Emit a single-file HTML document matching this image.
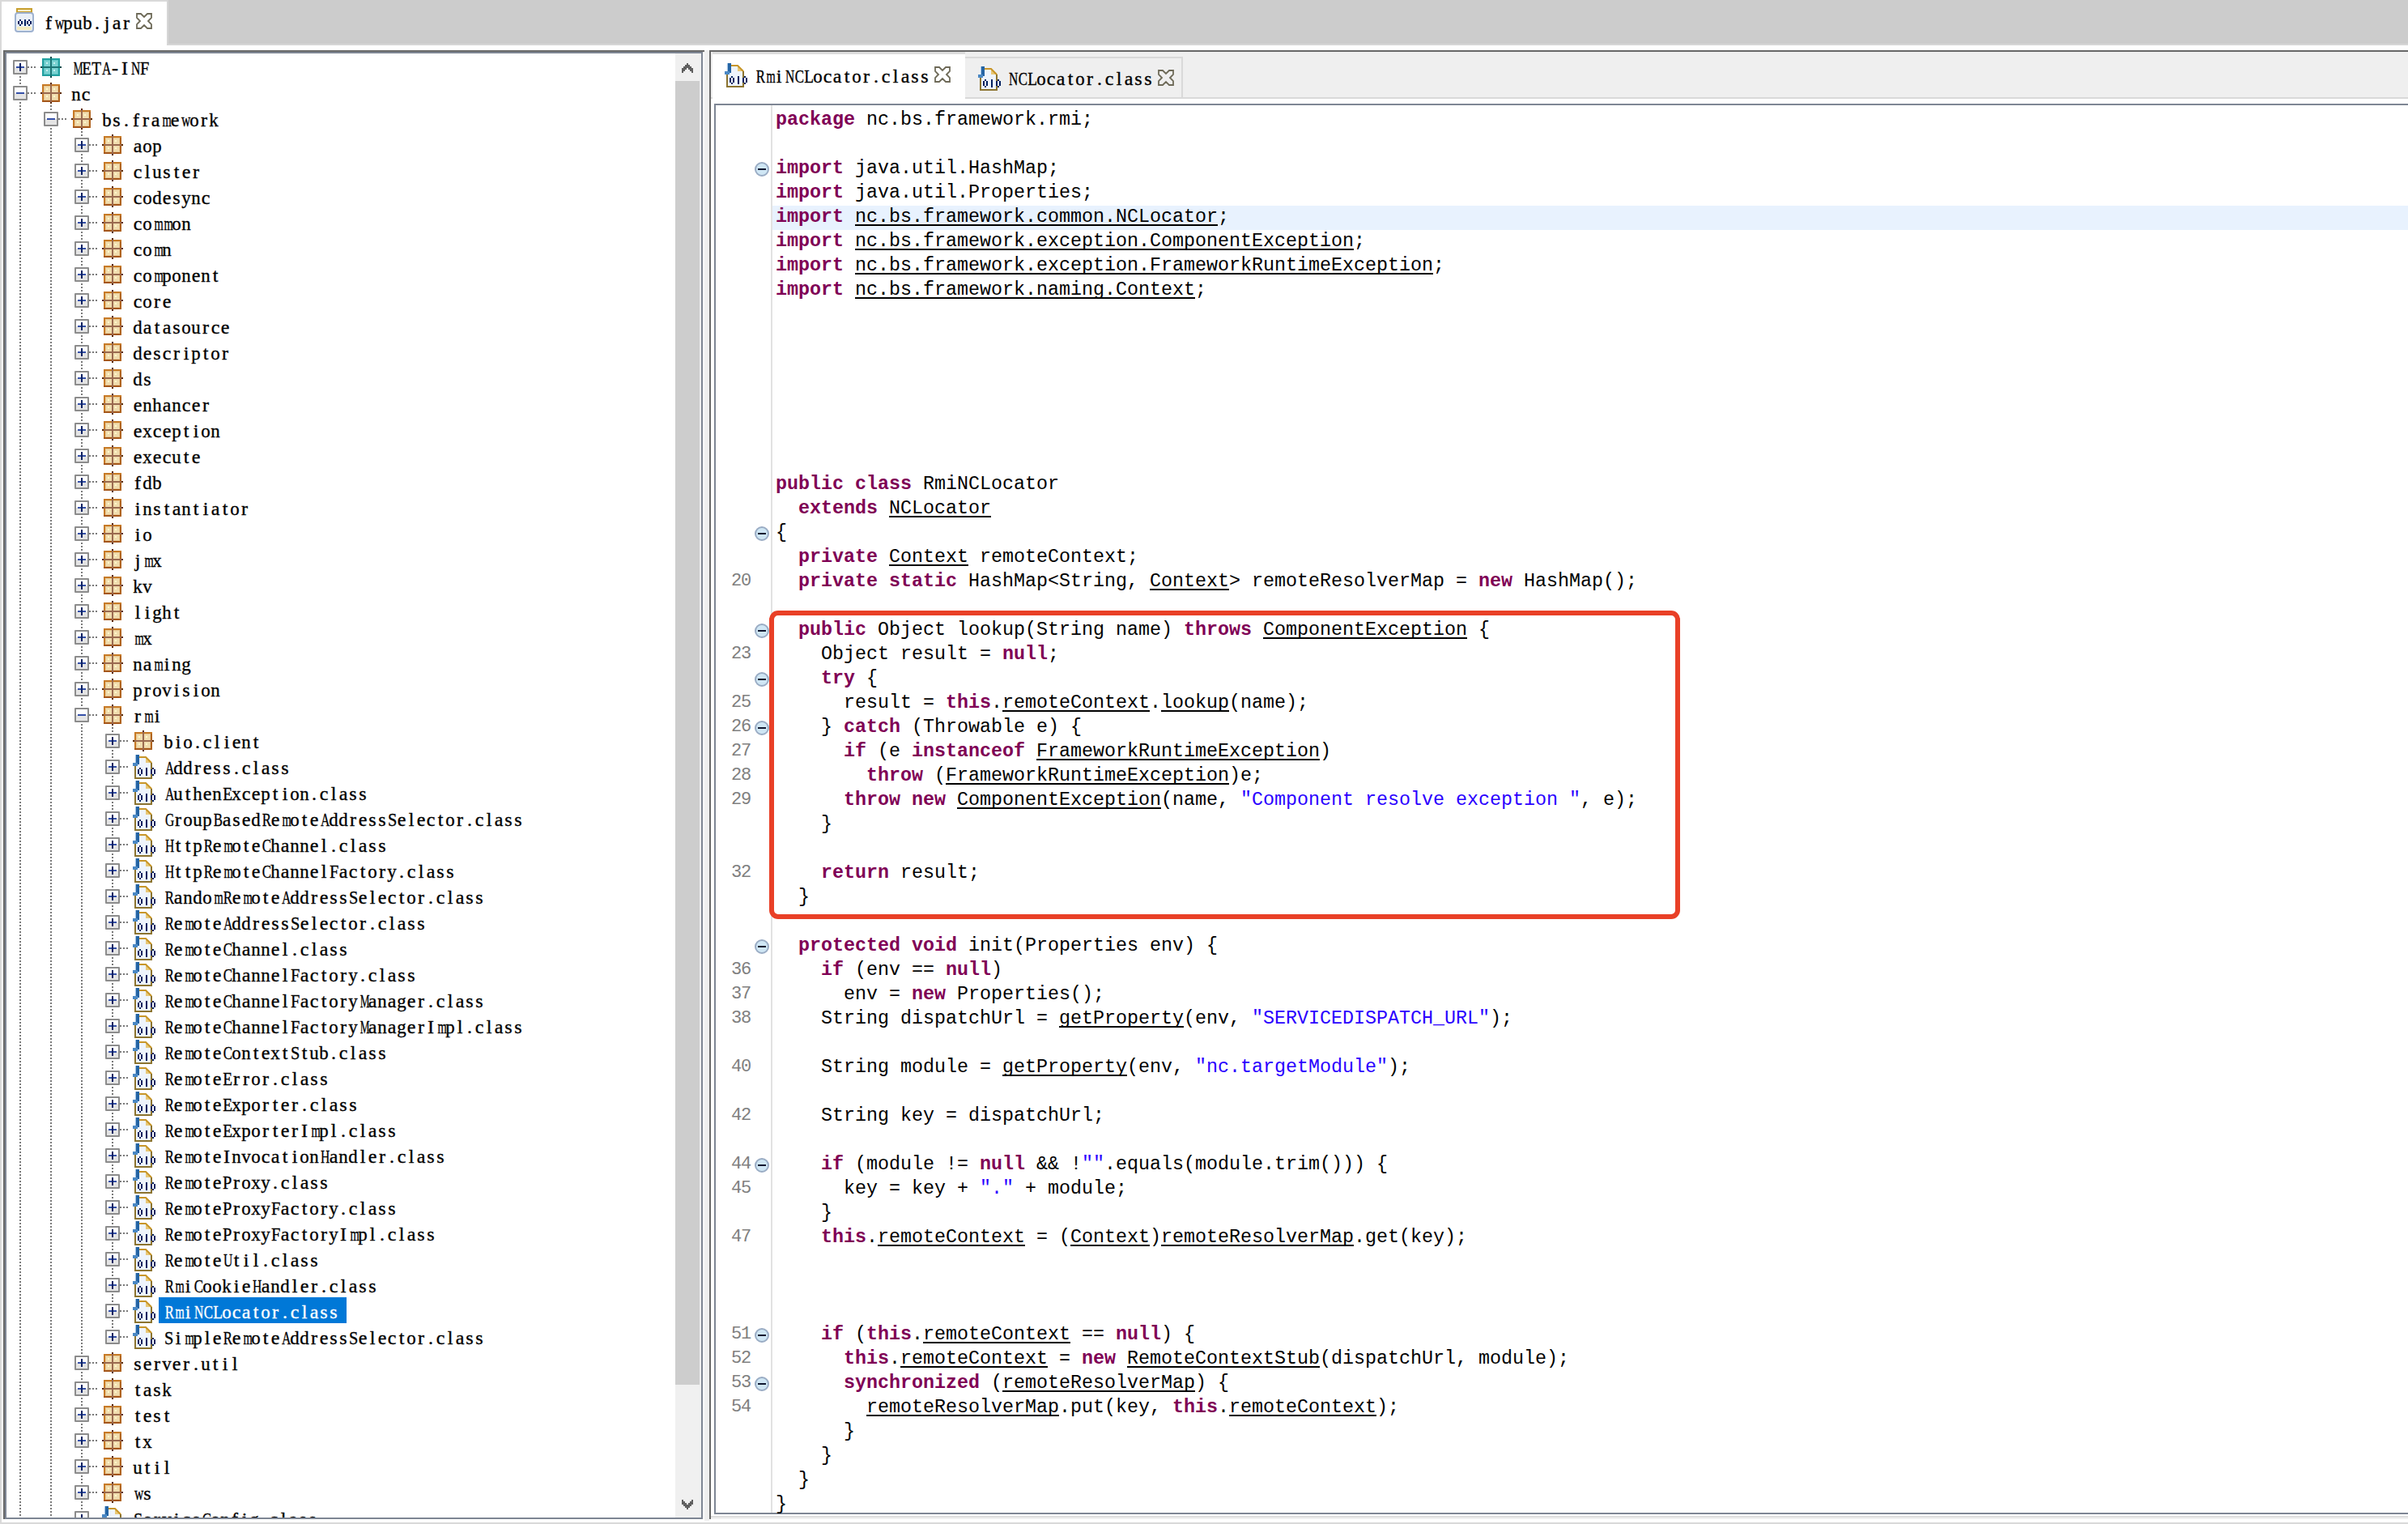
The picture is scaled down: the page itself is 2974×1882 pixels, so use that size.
<!DOCTYPE html>
<html><head><meta charset="utf-8">
<style>
html,body{margin:0;padding:0;}
body{width:2974px;height:1882px;position:relative;overflow:hidden;background:#fff;font-family:"Liberation Mono",monospace;}
.a{position:absolute;box-sizing:border-box;}
/* top bar */
#frameL{position:absolute;left:0;top:0;width:2px;height:1882px;background:#d9d9d9;}
#frameB{position:absolute;left:0;top:1880px;width:2974px;height:2px;background:#d9d9d9;}
#topbar{position:absolute;left:206px;top:0;width:2768px;height:56px;background:#cccccc;border-left:2px solid #d6d6d6;border-bottom:2px solid #d6d6d6;box-sizing:border-box;}
#toptop{position:absolute;left:0;top:0;width:206px;height:2px;background:#d9d9d9;}
.ttab{position:absolute;font-family:"Liberation Serif",serif;font-size:24px;-webkit-text-stroke:0.35px #000;line-height:32px;color:#000;white-space:pre;}
.tt b,.ttab b{display:inline-block;width:12px;text-align:center;font-weight:normal;}
.q8{transform:scaleX(0.40)}.q9{transform:scaleX(0.45)}.q10{transform:scaleX(0.50)}.q11{transform:scaleX(0.55)}.q12{transform:scaleX(0.60)}.q13{transform:scaleX(0.65)}.q14{transform:scaleX(0.70)}.q15{transform:scaleX(0.75)}.q16{transform:scaleX(0.80)}.q17{transform:scaleX(0.85)}.q18{transform:scaleX(0.90)}.q19{transform:scaleX(0.95)}
/* left panel */
#lp{position:absolute;left:4px;top:62px;width:866px;height:1814px;border-top:2px solid #686868;border-left:2px solid #686868;box-sizing:border-box;}
#lpi{position:absolute;left:6px;top:64px;width:862px;height:1812px;border:2px solid #7e8694;box-sizing:border-box;overflow:hidden;}
#tree{position:absolute;left:0;top:0;width:870px;height:1874px;overflow:hidden;}
#gap{position:absolute;left:870px;top:62px;width:6px;height:1816px;background:#efefef;}
#sb{position:absolute;left:834px;top:66px;width:32px;height:1808px;background:#f0f0f0;}
#thumb{position:absolute;left:834px;top:100px;width:30px;height:1610px;background:#cdcdcd;}
.vd{position:absolute;width:2px;background:repeating-linear-gradient(to bottom,transparent 0,transparent 2px,#7a7a7a 2px,#7a7a7a 4px);}
.hd{position:absolute;width:10px;height:2px;background:repeating-linear-gradient(to right,#7a7a7a 0,#7a7a7a 2px,transparent 2px,transparent 4px);}
.bx{position:absolute;width:18px;height:18px;box-sizing:border-box;border:2px solid #8c8c8c;background:linear-gradient(#ffffff 0,#ffffff 50%,#e4e4e4 50%,#e4e4e4 100%);border-radius:1px;}
.bx .h{position:absolute;left:2px;top:6px;width:10px;height:2px;background:#3550a8;}
.bx .v{position:absolute;left:6px;top:2px;width:2px;height:10px;background:#0c2262;}
.ic{position:absolute;overflow:visible;}
.tt{position:absolute;font-family:"Liberation Serif",serif;font-size:24px;line-height:32px;height:32px;color:#000;white-space:pre;padding-top:2px;-webkit-text-stroke:0.35px #000;box-sizing:border-box;}
.ts{color:#fff;-webkit-text-stroke:0.35px #fff;}
.sel{position:absolute;height:32px;background:#0078d7;}
/* right panel */
#rp{position:absolute;left:876px;top:62px;width:2098px;height:1814px;border-top:2px solid #686868;border-left:2px solid #686868;box-sizing:border-box;background:#ffffff;}
#tabstrip{position:absolute;left:878px;top:64px;width:2096px;height:58px;background:#efefef;border-bottom:2px solid #d9d9d9;box-sizing:border-box;}
#tab1{position:absolute;left:880px;top:64px;width:312px;height:58px;background:#fff;border-top:3px solid #dcdcdc;box-sizing:border-box;}
#tab2{position:absolute;left:1192px;top:70px;width:269px;height:52px;background:#efefef;border:2px solid #d9d9d9;border-left:none;box-sizing:border-box;}
#ed{position:absolute;left:882px;top:128px;width:2092px;height:1742px;border:2px solid #7e8694;border-right:none;box-sizing:border-box;background:#fff;}
#gut{position:absolute;left:952px;top:130px;width:2px;height:1738px;background:#e2e2e2;}
#hl{position:absolute;left:954px;top:254px;width:2020px;height:30px;background:#e8f2fe;}
#edb1{position:absolute;left:878px;top:1872px;width:2096px;height:2px;background:#dedede;}
#edb2{position:absolute;left:878px;top:1874px;width:2096px;height:2px;background:#f0f0f0;}
.cl{position:absolute;left:958px;height:30px;line-height:30px;font-size:23.333px;color:#000;white-space:pre;}
.k{font-weight:bold;color:#7f0055;}
.s{color:#2a00ff;}
.u{text-decoration:underline;text-decoration-thickness:2px;text-underline-offset:3px;text-decoration-skip-ink:none;}
.ln{position:absolute;left:881px;width:46px;text-align:right;height:30px;line-height:30px;font-size:22px;letter-spacing:-1.2px;color:#808080;white-space:pre;}
.fd{position:absolute;left:931px;}
#redbox{position:absolute;left:950px;top:754px;width:1125px;height:381px;border:6px solid #e94027;border-radius:11px;box-sizing:border-box;}
</style></head><body>
<svg width="0" height="0" style="position:absolute">
<defs>
<symbol id="pkg" viewBox="0 0 26 26">
<rect x="2" y="2" width="22" height="22" fill="#c77a26"/>
<rect x="2" y="22" width="22" height="2" fill="#a4561a"/><rect x="22" y="4" width="2" height="20" fill="#b06420"/>
<rect x="4" y="4" width="18" height="18" fill="#e6c692"/>
<rect x="5" y="5" width="7" height="7" fill="#f0dcae"/><rect x="14" y="5" width="7" height="7" fill="#f0dcae"/>
<rect x="5" y="14" width="7" height="7" fill="#f0dcae"/><rect x="14" y="14" width="7" height="7" fill="#f0dcae"/>
<rect x="7" y="7" width="2" height="2" fill="#fffacc"/><rect x="16" y="7" width="2" height="2" fill="#fffacc"/>
<rect x="7" y="16" width="2" height="2" fill="#fffacc"/><rect x="16" y="16" width="2" height="2" fill="#fffacc"/>
<rect x="12" y="2" width="2" height="22" fill="#9a6a50"/><rect x="2" y="12" width="22" height="2" fill="#9a6a50"/>
<rect x="12" y="0" width="2" height="2" fill="#5a2800"/><rect x="12" y="24" width="2" height="2" fill="#5a2800"/>
<rect x="0" y="12" width="2" height="2" fill="#5a2800"/><rect x="24" y="12" width="2" height="2" fill="#5a2800"/>
</symbol>
<symbol id="pkgm" viewBox="0 0 26 26">
<rect x="2" y="2" width="22" height="22" fill="#22a0a0"/>
<rect x="4" y="4" width="18" height="18" fill="#5cc4c4"/>
<rect x="5" y="5" width="7" height="7" fill="#7ad2d2"/><rect x="14" y="5" width="7" height="7" fill="#7ad2d2"/>
<rect x="5" y="14" width="7" height="7" fill="#7ad2d2"/><rect x="14" y="14" width="7" height="7" fill="#7ad2d2"/>
<rect x="7" y="7" width="2" height="2" fill="#c8f0f0"/><rect x="16" y="7" width="2" height="2" fill="#c8f0f0"/>
<rect x="7" y="16" width="2" height="2" fill="#c8f0f0"/><rect x="16" y="16" width="2" height="2" fill="#c8f0f0"/>
<rect x="12" y="2" width="2" height="22" fill="#1d7676"/><rect x="2" y="12" width="22" height="2" fill="#1d7676"/>
<rect x="12" y="0" width="2" height="2" fill="#0f4a4a"/><rect x="12" y="24" width="2" height="2" fill="#0f4a4a"/>
<rect x="0" y="12" width="2" height="2" fill="#0f4a4a"/><rect x="24" y="12" width="2" height="2" fill="#0f4a4a"/>
</symbol>
<symbol id="cls" viewBox="0 0 34 34">
<path d="M6 4 H20 L28 12 V32 H6 Z" fill="#eef4fc"/>
<path d="M20 4 V12 H28 Z" fill="#e8c878"/>
<path d="M12 5 H20 L27 12" fill="none" stroke="#c8962a" stroke-width="2"/>
<path d="M27 12 V31 H7 V16" fill="none" stroke="#8c7430" stroke-width="2"/>
<rect x="8" y="2" width="4" height="12" fill="#2464a4"/><rect x="7" y="2" width="1" height="12" fill="#a8c8e8"/>
<rect x="4" y="12" width="6" height="4" fill="#4a88c4"/>
<path d="M12 18H14V20H12ZM10 20H12V26H10ZM14 20H16V26H14ZM12 26H14V28H12Z" fill="#002060"/>
<rect x="20" y="18" width="2" height="10" fill="#002060"/>
<path d="M28 18H30V20H28ZM26 20H28V26H26ZM30 20H32V26H30ZM28 26H30V28H28Z" fill="#002060"/>
</symbol>
<symbol id="jar" viewBox="0 0 24 30">
<rect x="2" y="0" width="20" height="6" fill="#c8a030"/><rect x="4" y="2" width="16" height="2" fill="#f6eec8"/>
<rect x="1" y="6" width="22" height="23" rx="3" fill="#eaf0f8" stroke="#9eb2d0" stroke-width="2"/>
<rect x="3" y="23" width="18" height="4" fill="#f4ecc0"/>
<path d="M6 14H8V16H6ZM4 16H6V20H4ZM8 16H10V20H8ZM6 20H8V22H6Z" fill="#002060"/>
<rect x="12" y="14" width="2" height="8" fill="#002060"/>
<path d="M17 14H19V16H17ZM15 16H17V20H15ZM19 16H21V20H19ZM17 20H19V22H17Z" fill="#002060"/>
</symbol>
<symbol id="xx" viewBox="0 0 20 20">
<path d="M1 1 H6 L10 5 L14 1 H19 V6 L15 10 L19 14 V19 H14 L10 15 L6 19 H1 V14 L5 10 L1 6 Z" fill="none" stroke="#6e6a58" stroke-width="1.8"/>
</symbol>
<symbol id="fold" viewBox="0 0 20 20">
<circle cx="10" cy="10" r="8" fill="#cfe6f4" stroke="#9aacc4" stroke-width="2"/>
<rect x="5" y="9" width="10" height="2" fill="#101830"/>
</symbol>
<symbol id="chev" viewBox="0 0 14 12"><path d="M6 0H8V2H10V4H12V6H14V12H12V10H10V8H8V6H6V8H4V10H2V12H0V6H2V4H4V2H6Z" fill="#606060"/></symbol>
</defs></svg>

<div id="toptop"></div>
<div id="topbar"></div>
<div id="frameL"></div>
<svg class="ic" style="left:18px;top:10px" width="24" height="30"><use href="#jar"/></svg>
<div class="ttab" style="left:54px;top:12px"><b>f</b><b class="q13">w</b><b class="q19">p</b><b class="q19">u</b><b class="q19">b</b><b>.</b><b>j</b><b>a</b><b>r</b></div>
<svg class="ic" style="left:168px;top:16px" width="20" height="20"><use href="#xx"/></svg>

<div id="lp"></div>
<div id="lpi"></div>
<div id="tree">
<div class="vd" style="left:24px;top:92px;height:1782px"></div>
<div class="vd" style="left:62px;top:124px;height:1750px"></div>
<div class="vd" style="left:100px;top:156px;height:1718px"></div>
<div class="vd" style="left:138px;top:892px;height:754px"></div>
<div class="hd" style="left:34px;top:82px"></div>
<div class="bx" style="left:16px;top:74px"><i class="h"></i><i class="v"></i></div>
<svg class="ic" style="left:50px;top:70px" width="26" height="26"><use href="#pkgm"/></svg>
<div class="tt" style="left:88px;top:66px"><b class="q11">M</b><b class="q16">E</b><b class="q16">T</b><b class="q13">A</b><b>-</b><b>I</b><b class="q13">N</b><b class="q17">F</b></div>
<div class="hd" style="left:34px;top:114px"></div>
<div class="bx" style="left:16px;top:106px"><i class="h"></i></div>
<svg class="ic" style="left:50px;top:102px" width="26" height="26"><use href="#pkg"/></svg>
<div class="tt" style="left:88px;top:98px"><b class="q19">n</b><b>c</b></div>
<div class="hd" style="left:72px;top:146px"></div>
<div class="bx" style="left:54px;top:138px"><i class="h"></i></div>
<svg class="ic" style="left:88px;top:134px" width="26" height="26"><use href="#pkg"/></svg>
<div class="tt" style="left:126px;top:130px"><b class="q19">b</b><b>s</b><b>.</b><b>f</b><b>r</b><b>a</b><b class="q12">m</b><b>e</b><b class="q13">w</b><b class="q19">o</b><b>r</b><b class="q19">k</b></div>
<div class="hd" style="left:110px;top:178px"></div>
<div class="bx" style="left:92px;top:170px"><i class="h"></i><i class="v"></i></div>
<svg class="ic" style="left:126px;top:166px" width="26" height="26"><use href="#pkg"/></svg>
<div class="tt" style="left:164px;top:162px"><b>a</b><b class="q19">o</b><b class="q19">p</b></div>
<div class="hd" style="left:110px;top:210px"></div>
<div class="bx" style="left:92px;top:202px"><i class="h"></i><i class="v"></i></div>
<svg class="ic" style="left:126px;top:198px" width="26" height="26"><use href="#pkg"/></svg>
<div class="tt" style="left:164px;top:194px"><b>c</b><b>l</b><b class="q19">u</b><b>s</b><b>t</b><b>e</b><b>r</b></div>
<div class="hd" style="left:110px;top:242px"></div>
<div class="bx" style="left:92px;top:234px"><i class="h"></i><i class="v"></i></div>
<svg class="ic" style="left:126px;top:230px" width="26" height="26"><use href="#pkg"/></svg>
<div class="tt" style="left:164px;top:226px"><b>c</b><b class="q19">o</b><b class="q19">d</b><b>e</b><b>s</b><b class="q19">y</b><b class="q19">n</b><b>c</b></div>
<div class="hd" style="left:110px;top:274px"></div>
<div class="bx" style="left:92px;top:266px"><i class="h"></i><i class="v"></i></div>
<svg class="ic" style="left:126px;top:262px" width="26" height="26"><use href="#pkg"/></svg>
<div class="tt" style="left:164px;top:258px"><b>c</b><b class="q19">o</b><b class="q12">m</b><b class="q12">m</b><b class="q19">o</b><b class="q19">n</b></div>
<div class="hd" style="left:110px;top:306px"></div>
<div class="bx" style="left:92px;top:298px"><i class="h"></i><i class="v"></i></div>
<svg class="ic" style="left:126px;top:294px" width="26" height="26"><use href="#pkg"/></svg>
<div class="tt" style="left:164px;top:290px"><b>c</b><b class="q19">o</b><b class="q12">m</b><b class="q19">n</b></div>
<div class="hd" style="left:110px;top:338px"></div>
<div class="bx" style="left:92px;top:330px"><i class="h"></i><i class="v"></i></div>
<svg class="ic" style="left:126px;top:326px" width="26" height="26"><use href="#pkg"/></svg>
<div class="tt" style="left:164px;top:322px"><b>c</b><b class="q19">o</b><b class="q12">m</b><b class="q19">p</b><b class="q19">o</b><b class="q19">n</b><b>e</b><b class="q19">n</b><b>t</b></div>
<div class="hd" style="left:110px;top:370px"></div>
<div class="bx" style="left:92px;top:362px"><i class="h"></i><i class="v"></i></div>
<svg class="ic" style="left:126px;top:358px" width="26" height="26"><use href="#pkg"/></svg>
<div class="tt" style="left:164px;top:354px"><b>c</b><b class="q19">o</b><b>r</b><b>e</b></div>
<div class="hd" style="left:110px;top:402px"></div>
<div class="bx" style="left:92px;top:394px"><i class="h"></i><i class="v"></i></div>
<svg class="ic" style="left:126px;top:390px" width="26" height="26"><use href="#pkg"/></svg>
<div class="tt" style="left:164px;top:386px"><b class="q19">d</b><b>a</b><b>t</b><b>a</b><b>s</b><b class="q19">o</b><b class="q19">u</b><b>r</b><b>c</b><b>e</b></div>
<div class="hd" style="left:110px;top:434px"></div>
<div class="bx" style="left:92px;top:426px"><i class="h"></i><i class="v"></i></div>
<svg class="ic" style="left:126px;top:422px" width="26" height="26"><use href="#pkg"/></svg>
<div class="tt" style="left:164px;top:418px"><b class="q19">d</b><b>e</b><b>s</b><b>c</b><b>r</b><b>i</b><b class="q19">p</b><b>t</b><b class="q19">o</b><b>r</b></div>
<div class="hd" style="left:110px;top:466px"></div>
<div class="bx" style="left:92px;top:458px"><i class="h"></i><i class="v"></i></div>
<svg class="ic" style="left:126px;top:454px" width="26" height="26"><use href="#pkg"/></svg>
<div class="tt" style="left:164px;top:450px"><b class="q19">d</b><b>s</b></div>
<div class="hd" style="left:110px;top:498px"></div>
<div class="bx" style="left:92px;top:490px"><i class="h"></i><i class="v"></i></div>
<svg class="ic" style="left:126px;top:486px" width="26" height="26"><use href="#pkg"/></svg>
<div class="tt" style="left:164px;top:482px"><b>e</b><b class="q19">n</b><b class="q19">h</b><b>a</b><b class="q19">n</b><b>c</b><b>e</b><b>r</b></div>
<div class="hd" style="left:110px;top:530px"></div>
<div class="bx" style="left:92px;top:522px"><i class="h"></i><i class="v"></i></div>
<svg class="ic" style="left:126px;top:518px" width="26" height="26"><use href="#pkg"/></svg>
<div class="tt" style="left:164px;top:514px"><b>e</b><b class="q19">x</b><b>c</b><b>e</b><b class="q19">p</b><b>t</b><b>i</b><b class="q19">o</b><b class="q19">n</b></div>
<div class="hd" style="left:110px;top:562px"></div>
<div class="bx" style="left:92px;top:554px"><i class="h"></i><i class="v"></i></div>
<svg class="ic" style="left:126px;top:550px" width="26" height="26"><use href="#pkg"/></svg>
<div class="tt" style="left:164px;top:546px"><b>e</b><b class="q19">x</b><b>e</b><b>c</b><b class="q19">u</b><b>t</b><b>e</b></div>
<div class="hd" style="left:110px;top:594px"></div>
<div class="bx" style="left:92px;top:586px"><i class="h"></i><i class="v"></i></div>
<svg class="ic" style="left:126px;top:582px" width="26" height="26"><use href="#pkg"/></svg>
<div class="tt" style="left:164px;top:578px"><b>f</b><b class="q19">d</b><b class="q19">b</b></div>
<div class="hd" style="left:110px;top:626px"></div>
<div class="bx" style="left:92px;top:618px"><i class="h"></i><i class="v"></i></div>
<svg class="ic" style="left:126px;top:614px" width="26" height="26"><use href="#pkg"/></svg>
<div class="tt" style="left:164px;top:610px"><b>i</b><b class="q19">n</b><b>s</b><b>t</b><b>a</b><b class="q19">n</b><b>t</b><b>i</b><b>a</b><b>t</b><b class="q19">o</b><b>r</b></div>
<div class="hd" style="left:110px;top:658px"></div>
<div class="bx" style="left:92px;top:650px"><i class="h"></i><i class="v"></i></div>
<svg class="ic" style="left:126px;top:646px" width="26" height="26"><use href="#pkg"/></svg>
<div class="tt" style="left:164px;top:642px"><b>i</b><b class="q19">o</b></div>
<div class="hd" style="left:110px;top:690px"></div>
<div class="bx" style="left:92px;top:682px"><i class="h"></i><i class="v"></i></div>
<svg class="ic" style="left:126px;top:678px" width="26" height="26"><use href="#pkg"/></svg>
<div class="tt" style="left:164px;top:674px"><b>j</b><b class="q12">m</b><b class="q19">x</b></div>
<div class="hd" style="left:110px;top:722px"></div>
<div class="bx" style="left:92px;top:714px"><i class="h"></i><i class="v"></i></div>
<svg class="ic" style="left:126px;top:710px" width="26" height="26"><use href="#pkg"/></svg>
<div class="tt" style="left:164px;top:706px"><b class="q19">k</b><b class="q19">v</b></div>
<div class="hd" style="left:110px;top:754px"></div>
<div class="bx" style="left:92px;top:746px"><i class="h"></i><i class="v"></i></div>
<svg class="ic" style="left:126px;top:742px" width="26" height="26"><use href="#pkg"/></svg>
<div class="tt" style="left:164px;top:738px"><b>l</b><b>i</b><b class="q19">g</b><b class="q19">h</b><b>t</b></div>
<div class="hd" style="left:110px;top:786px"></div>
<div class="bx" style="left:92px;top:778px"><i class="h"></i><i class="v"></i></div>
<svg class="ic" style="left:126px;top:774px" width="26" height="26"><use href="#pkg"/></svg>
<div class="tt" style="left:164px;top:770px"><b class="q12">m</b><b class="q19">x</b></div>
<div class="hd" style="left:110px;top:818px"></div>
<div class="bx" style="left:92px;top:810px"><i class="h"></i><i class="v"></i></div>
<svg class="ic" style="left:126px;top:806px" width="26" height="26"><use href="#pkg"/></svg>
<div class="tt" style="left:164px;top:802px"><b class="q19">n</b><b>a</b><b class="q12">m</b><b>i</b><b class="q19">n</b><b class="q19">g</b></div>
<div class="hd" style="left:110px;top:850px"></div>
<div class="bx" style="left:92px;top:842px"><i class="h"></i><i class="v"></i></div>
<svg class="ic" style="left:126px;top:838px" width="26" height="26"><use href="#pkg"/></svg>
<div class="tt" style="left:164px;top:834px"><b class="q19">p</b><b>r</b><b class="q19">o</b><b class="q19">v</b><b>i</b><b>s</b><b>i</b><b class="q19">o</b><b class="q19">n</b></div>
<div class="hd" style="left:110px;top:882px"></div>
<div class="bx" style="left:92px;top:874px"><i class="h"></i></div>
<svg class="ic" style="left:126px;top:870px" width="26" height="26"><use href="#pkg"/></svg>
<div class="tt" style="left:164px;top:866px"><b>r</b><b class="q12">m</b><b>i</b></div>
<div class="hd" style="left:148px;top:914px"></div>
<div class="bx" style="left:130px;top:906px"><i class="h"></i><i class="v"></i></div>
<svg class="ic" style="left:164px;top:902px" width="26" height="26"><use href="#pkg"/></svg>
<div class="tt" style="left:202px;top:898px"><b class="q19">b</b><b>i</b><b class="q19">o</b><b>.</b><b>c</b><b>l</b><b>i</b><b>e</b><b class="q19">n</b><b>t</b></div>
<div class="hd" style="left:148px;top:946px"></div>
<div class="bx" style="left:130px;top:938px"><i class="h"></i><i class="v"></i></div>
<svg class="ic" style="left:160px;top:930px" width="34" height="34"><use href="#cls"/></svg>
<div class="tt" style="left:202px;top:930px"><b class="q13">A</b><b class="q19">d</b><b class="q19">d</b><b>r</b><b>e</b><b>s</b><b>s</b><b>.</b><b>c</b><b>l</b><b>a</b><b>s</b><b>s</b></div>
<div class="hd" style="left:148px;top:978px"></div>
<div class="bx" style="left:130px;top:970px"><i class="h"></i><i class="v"></i></div>
<svg class="ic" style="left:160px;top:962px" width="34" height="34"><use href="#cls"/></svg>
<div class="tt" style="left:202px;top:962px"><b class="q13">A</b><b class="q19">u</b><b>t</b><b class="q19">h</b><b>e</b><b class="q19">n</b><b class="q16">E</b><b class="q19">x</b><b>c</b><b>e</b><b class="q19">p</b><b>t</b><b>i</b><b class="q19">o</b><b class="q19">n</b><b>.</b><b>c</b><b>l</b><b>a</b><b>s</b><b>s</b></div>
<div class="hd" style="left:148px;top:1010px"></div>
<div class="bx" style="left:130px;top:1002px"><i class="h"></i><i class="v"></i></div>
<svg class="ic" style="left:160px;top:994px" width="34" height="34"><use href="#cls"/></svg>
<div class="tt" style="left:202px;top:994px"><b class="q13">G</b><b>r</b><b class="q19">o</b><b class="q19">u</b><b class="q19">p</b><b class="q14">B</b><b>a</b><b>s</b><b>e</b><b class="q19">d</b><b class="q14">R</b><b>e</b><b class="q12">m</b><b class="q19">o</b><b>t</b><b>e</b><b class="q13">A</b><b class="q19">d</b><b class="q19">d</b><b>r</b><b>e</b><b>s</b><b>s</b><b class="q17">S</b><b>e</b><b>l</b><b>e</b><b>c</b><b>t</b><b class="q19">o</b><b>r</b><b>.</b><b>c</b><b>l</b><b>a</b><b>s</b><b>s</b></div>
<div class="hd" style="left:148px;top:1042px"></div>
<div class="bx" style="left:130px;top:1034px"><i class="h"></i><i class="v"></i></div>
<svg class="ic" style="left:160px;top:1026px" width="34" height="34"><use href="#cls"/></svg>
<div class="tt" style="left:202px;top:1026px"><b class="q13">H</b><b>t</b><b>t</b><b class="q19">p</b><b class="q14">R</b><b>e</b><b class="q12">m</b><b class="q19">o</b><b>t</b><b>e</b><b class="q14">C</b><b class="q19">h</b><b>a</b><b class="q19">n</b><b class="q19">n</b><b>e</b><b>l</b><b>.</b><b>c</b><b>l</b><b>a</b><b>s</b><b>s</b></div>
<div class="hd" style="left:148px;top:1074px"></div>
<div class="bx" style="left:130px;top:1066px"><i class="h"></i><i class="v"></i></div>
<svg class="ic" style="left:160px;top:1058px" width="34" height="34"><use href="#cls"/></svg>
<div class="tt" style="left:202px;top:1058px"><b class="q13">H</b><b>t</b><b>t</b><b class="q19">p</b><b class="q14">R</b><b>e</b><b class="q12">m</b><b class="q19">o</b><b>t</b><b>e</b><b class="q14">C</b><b class="q19">h</b><b>a</b><b class="q19">n</b><b class="q19">n</b><b>e</b><b>l</b><b class="q17">F</b><b>a</b><b>c</b><b>t</b><b class="q19">o</b><b>r</b><b class="q19">y</b><b>.</b><b>c</b><b>l</b><b>a</b><b>s</b><b>s</b></div>
<div class="hd" style="left:148px;top:1106px"></div>
<div class="bx" style="left:130px;top:1098px"><i class="h"></i><i class="v"></i></div>
<svg class="ic" style="left:160px;top:1090px" width="34" height="34"><use href="#cls"/></svg>
<div class="tt" style="left:202px;top:1090px"><b class="q14">R</b><b>a</b><b class="q19">n</b><b class="q19">d</b><b class="q19">o</b><b class="q12">m</b><b class="q14">R</b><b>e</b><b class="q12">m</b><b class="q19">o</b><b>t</b><b>e</b><b class="q13">A</b><b class="q19">d</b><b class="q19">d</b><b>r</b><b>e</b><b>s</b><b>s</b><b class="q17">S</b><b>e</b><b>l</b><b>e</b><b>c</b><b>t</b><b class="q19">o</b><b>r</b><b>.</b><b>c</b><b>l</b><b>a</b><b>s</b><b>s</b></div>
<div class="hd" style="left:148px;top:1138px"></div>
<div class="bx" style="left:130px;top:1130px"><i class="h"></i><i class="v"></i></div>
<svg class="ic" style="left:160px;top:1122px" width="34" height="34"><use href="#cls"/></svg>
<div class="tt" style="left:202px;top:1122px"><b class="q14">R</b><b>e</b><b class="q12">m</b><b class="q19">o</b><b>t</b><b>e</b><b class="q13">A</b><b class="q19">d</b><b class="q19">d</b><b>r</b><b>e</b><b>s</b><b>s</b><b class="q17">S</b><b>e</b><b>l</b><b>e</b><b>c</b><b>t</b><b class="q19">o</b><b>r</b><b>.</b><b>c</b><b>l</b><b>a</b><b>s</b><b>s</b></div>
<div class="hd" style="left:148px;top:1170px"></div>
<div class="bx" style="left:130px;top:1162px"><i class="h"></i><i class="v"></i></div>
<svg class="ic" style="left:160px;top:1154px" width="34" height="34"><use href="#cls"/></svg>
<div class="tt" style="left:202px;top:1154px"><b class="q14">R</b><b>e</b><b class="q12">m</b><b class="q19">o</b><b>t</b><b>e</b><b class="q14">C</b><b class="q19">h</b><b>a</b><b class="q19">n</b><b class="q19">n</b><b>e</b><b>l</b><b>.</b><b>c</b><b>l</b><b>a</b><b>s</b><b>s</b></div>
<div class="hd" style="left:148px;top:1202px"></div>
<div class="bx" style="left:130px;top:1194px"><i class="h"></i><i class="v"></i></div>
<svg class="ic" style="left:160px;top:1186px" width="34" height="34"><use href="#cls"/></svg>
<div class="tt" style="left:202px;top:1186px"><b class="q14">R</b><b>e</b><b class="q12">m</b><b class="q19">o</b><b>t</b><b>e</b><b class="q14">C</b><b class="q19">h</b><b>a</b><b class="q19">n</b><b class="q19">n</b><b>e</b><b>l</b><b class="q17">F</b><b>a</b><b>c</b><b>t</b><b class="q19">o</b><b>r</b><b class="q19">y</b><b>.</b><b>c</b><b>l</b><b>a</b><b>s</b><b>s</b></div>
<div class="hd" style="left:148px;top:1234px"></div>
<div class="bx" style="left:130px;top:1226px"><i class="h"></i><i class="v"></i></div>
<svg class="ic" style="left:160px;top:1218px" width="34" height="34"><use href="#cls"/></svg>
<div class="tt" style="left:202px;top:1218px"><b class="q14">R</b><b>e</b><b class="q12">m</b><b class="q19">o</b><b>t</b><b>e</b><b class="q14">C</b><b class="q19">h</b><b>a</b><b class="q19">n</b><b class="q19">n</b><b>e</b><b>l</b><b class="q17">F</b><b>a</b><b>c</b><b>t</b><b class="q19">o</b><b>r</b><b class="q19">y</b><b class="q11">M</b><b>a</b><b class="q19">n</b><b>a</b><b class="q19">g</b><b>e</b><b>r</b><b>.</b><b>c</b><b>l</b><b>a</b><b>s</b><b>s</b></div>
<div class="hd" style="left:148px;top:1266px"></div>
<div class="bx" style="left:130px;top:1258px"><i class="h"></i><i class="v"></i></div>
<svg class="ic" style="left:160px;top:1250px" width="34" height="34"><use href="#cls"/></svg>
<div class="tt" style="left:202px;top:1250px"><b class="q14">R</b><b>e</b><b class="q12">m</b><b class="q19">o</b><b>t</b><b>e</b><b class="q14">C</b><b class="q19">h</b><b>a</b><b class="q19">n</b><b class="q19">n</b><b>e</b><b>l</b><b class="q17">F</b><b>a</b><b>c</b><b>t</b><b class="q19">o</b><b>r</b><b class="q19">y</b><b class="q11">M</b><b>a</b><b class="q19">n</b><b>a</b><b class="q19">g</b><b>e</b><b>r</b><b>I</b><b class="q12">m</b><b class="q19">p</b><b>l</b><b>.</b><b>c</b><b>l</b><b>a</b><b>s</b><b>s</b></div>
<div class="hd" style="left:148px;top:1298px"></div>
<div class="bx" style="left:130px;top:1290px"><i class="h"></i><i class="v"></i></div>
<svg class="ic" style="left:160px;top:1282px" width="34" height="34"><use href="#cls"/></svg>
<div class="tt" style="left:202px;top:1282px"><b class="q14">R</b><b>e</b><b class="q12">m</b><b class="q19">o</b><b>t</b><b>e</b><b class="q14">C</b><b class="q19">o</b><b class="q19">n</b><b>t</b><b>e</b><b class="q19">x</b><b>t</b><b class="q17">S</b><b>t</b><b class="q19">u</b><b class="q19">b</b><b>.</b><b>c</b><b>l</b><b>a</b><b>s</b><b>s</b></div>
<div class="hd" style="left:148px;top:1330px"></div>
<div class="bx" style="left:130px;top:1322px"><i class="h"></i><i class="v"></i></div>
<svg class="ic" style="left:160px;top:1314px" width="34" height="34"><use href="#cls"/></svg>
<div class="tt" style="left:202px;top:1314px"><b class="q14">R</b><b>e</b><b class="q12">m</b><b class="q19">o</b><b>t</b><b>e</b><b class="q16">E</b><b>r</b><b>r</b><b class="q19">o</b><b>r</b><b>.</b><b>c</b><b>l</b><b>a</b><b>s</b><b>s</b></div>
<div class="hd" style="left:148px;top:1362px"></div>
<div class="bx" style="left:130px;top:1354px"><i class="h"></i><i class="v"></i></div>
<svg class="ic" style="left:160px;top:1346px" width="34" height="34"><use href="#cls"/></svg>
<div class="tt" style="left:202px;top:1346px"><b class="q14">R</b><b>e</b><b class="q12">m</b><b class="q19">o</b><b>t</b><b>e</b><b class="q16">E</b><b class="q19">x</b><b class="q19">p</b><b class="q19">o</b><b>r</b><b>t</b><b>e</b><b>r</b><b>.</b><b>c</b><b>l</b><b>a</b><b>s</b><b>s</b></div>
<div class="hd" style="left:148px;top:1394px"></div>
<div class="bx" style="left:130px;top:1386px"><i class="h"></i><i class="v"></i></div>
<svg class="ic" style="left:160px;top:1378px" width="34" height="34"><use href="#cls"/></svg>
<div class="tt" style="left:202px;top:1378px"><b class="q14">R</b><b>e</b><b class="q12">m</b><b class="q19">o</b><b>t</b><b>e</b><b class="q16">E</b><b class="q19">x</b><b class="q19">p</b><b class="q19">o</b><b>r</b><b>t</b><b>e</b><b>r</b><b>I</b><b class="q12">m</b><b class="q19">p</b><b>l</b><b>.</b><b>c</b><b>l</b><b>a</b><b>s</b><b>s</b></div>
<div class="hd" style="left:148px;top:1426px"></div>
<div class="bx" style="left:130px;top:1418px"><i class="h"></i><i class="v"></i></div>
<svg class="ic" style="left:160px;top:1410px" width="34" height="34"><use href="#cls"/></svg>
<div class="tt" style="left:202px;top:1410px"><b class="q14">R</b><b>e</b><b class="q12">m</b><b class="q19">o</b><b>t</b><b>e</b><b>I</b><b class="q19">n</b><b class="q19">v</b><b class="q19">o</b><b>c</b><b>a</b><b>t</b><b>i</b><b class="q19">o</b><b class="q19">n</b><b class="q13">H</b><b>a</b><b class="q19">n</b><b class="q19">d</b><b>l</b><b>e</b><b>r</b><b>.</b><b>c</b><b>l</b><b>a</b><b>s</b><b>s</b></div>
<div class="hd" style="left:148px;top:1458px"></div>
<div class="bx" style="left:130px;top:1450px"><i class="h"></i><i class="v"></i></div>
<svg class="ic" style="left:160px;top:1442px" width="34" height="34"><use href="#cls"/></svg>
<div class="tt" style="left:202px;top:1442px"><b class="q14">R</b><b>e</b><b class="q12">m</b><b class="q19">o</b><b>t</b><b>e</b><b class="q17">P</b><b>r</b><b class="q19">o</b><b class="q19">x</b><b class="q19">y</b><b>.</b><b>c</b><b>l</b><b>a</b><b>s</b><b>s</b></div>
<div class="hd" style="left:148px;top:1490px"></div>
<div class="bx" style="left:130px;top:1482px"><i class="h"></i><i class="v"></i></div>
<svg class="ic" style="left:160px;top:1474px" width="34" height="34"><use href="#cls"/></svg>
<div class="tt" style="left:202px;top:1474px"><b class="q14">R</b><b>e</b><b class="q12">m</b><b class="q19">o</b><b>t</b><b>e</b><b class="q17">P</b><b>r</b><b class="q19">o</b><b class="q19">x</b><b class="q19">y</b><b class="q17">F</b><b>a</b><b>c</b><b>t</b><b class="q19">o</b><b>r</b><b class="q19">y</b><b>.</b><b>c</b><b>l</b><b>a</b><b>s</b><b>s</b></div>
<div class="hd" style="left:148px;top:1522px"></div>
<div class="bx" style="left:130px;top:1514px"><i class="h"></i><i class="v"></i></div>
<svg class="ic" style="left:160px;top:1506px" width="34" height="34"><use href="#cls"/></svg>
<div class="tt" style="left:202px;top:1506px"><b class="q14">R</b><b>e</b><b class="q12">m</b><b class="q19">o</b><b>t</b><b>e</b><b class="q17">P</b><b>r</b><b class="q19">o</b><b class="q19">x</b><b class="q19">y</b><b class="q17">F</b><b>a</b><b>c</b><b>t</b><b class="q19">o</b><b>r</b><b class="q19">y</b><b>I</b><b class="q12">m</b><b class="q19">p</b><b>l</b><b>.</b><b>c</b><b>l</b><b>a</b><b>s</b><b>s</b></div>
<div class="hd" style="left:148px;top:1554px"></div>
<div class="bx" style="left:130px;top:1546px"><i class="h"></i><i class="v"></i></div>
<svg class="ic" style="left:160px;top:1538px" width="34" height="34"><use href="#cls"/></svg>
<div class="tt" style="left:202px;top:1538px"><b class="q14">R</b><b>e</b><b class="q12">m</b><b class="q19">o</b><b>t</b><b>e</b><b class="q13">U</b><b>t</b><b>i</b><b>l</b><b>.</b><b>c</b><b>l</b><b>a</b><b>s</b><b>s</b></div>
<div class="hd" style="left:148px;top:1586px"></div>
<div class="bx" style="left:130px;top:1578px"><i class="h"></i><i class="v"></i></div>
<svg class="ic" style="left:160px;top:1570px" width="34" height="34"><use href="#cls"/></svg>
<div class="tt" style="left:202px;top:1570px"><b class="q14">R</b><b class="q12">m</b><b>i</b><b class="q14">C</b><b class="q19">o</b><b class="q19">o</b><b class="q19">k</b><b>i</b><b>e</b><b class="q13">H</b><b>a</b><b class="q19">n</b><b class="q19">d</b><b>l</b><b>e</b><b>r</b><b>.</b><b>c</b><b>l</b><b>a</b><b>s</b><b>s</b></div>
<div class="hd" style="left:148px;top:1618px"></div>
<div class="bx" style="left:130px;top:1610px"><i class="h"></i><i class="v"></i></div>
<svg class="ic" style="left:160px;top:1602px" width="34" height="34"><use href="#cls"/></svg>
<div class="sel" style="left:196px;top:1602px;width:232px"></div>
<div class="tt ts" style="left:202px;top:1602px"><b class="q14">R</b><b class="q12">m</b><b>i</b><b class="q13">N</b><b class="q14">C</b><b class="q16">L</b><b class="q19">o</b><b>c</b><b>a</b><b>t</b><b class="q19">o</b><b>r</b><b>.</b><b>c</b><b>l</b><b>a</b><b>s</b><b>s</b></div>
<div class="hd" style="left:148px;top:1650px"></div>
<div class="bx" style="left:130px;top:1642px"><i class="h"></i><i class="v"></i></div>
<svg class="ic" style="left:160px;top:1634px" width="34" height="34"><use href="#cls"/></svg>
<div class="tt" style="left:202px;top:1634px"><b class="q17">S</b><b>i</b><b class="q12">m</b><b class="q19">p</b><b>l</b><b>e</b><b class="q14">R</b><b>e</b><b class="q12">m</b><b class="q19">o</b><b>t</b><b>e</b><b class="q13">A</b><b class="q19">d</b><b class="q19">d</b><b>r</b><b>e</b><b>s</b><b>s</b><b class="q17">S</b><b>e</b><b>l</b><b>e</b><b>c</b><b>t</b><b class="q19">o</b><b>r</b><b>.</b><b>c</b><b>l</b><b>a</b><b>s</b><b>s</b></div>
<div class="hd" style="left:110px;top:1682px"></div>
<div class="bx" style="left:92px;top:1674px"><i class="h"></i><i class="v"></i></div>
<svg class="ic" style="left:126px;top:1670px" width="26" height="26"><use href="#pkg"/></svg>
<div class="tt" style="left:164px;top:1666px"><b>s</b><b>e</b><b>r</b><b class="q19">v</b><b>e</b><b>r</b><b>.</b><b class="q19">u</b><b>t</b><b>i</b><b>l</b></div>
<div class="hd" style="left:110px;top:1714px"></div>
<div class="bx" style="left:92px;top:1706px"><i class="h"></i><i class="v"></i></div>
<svg class="ic" style="left:126px;top:1702px" width="26" height="26"><use href="#pkg"/></svg>
<div class="tt" style="left:164px;top:1698px"><b>t</b><b>a</b><b>s</b><b class="q19">k</b></div>
<div class="hd" style="left:110px;top:1746px"></div>
<div class="bx" style="left:92px;top:1738px"><i class="h"></i><i class="v"></i></div>
<svg class="ic" style="left:126px;top:1734px" width="26" height="26"><use href="#pkg"/></svg>
<div class="tt" style="left:164px;top:1730px"><b>t</b><b>e</b><b>s</b><b>t</b></div>
<div class="hd" style="left:110px;top:1778px"></div>
<div class="bx" style="left:92px;top:1770px"><i class="h"></i><i class="v"></i></div>
<svg class="ic" style="left:126px;top:1766px" width="26" height="26"><use href="#pkg"/></svg>
<div class="tt" style="left:164px;top:1762px"><b>t</b><b class="q19">x</b></div>
<div class="hd" style="left:110px;top:1810px"></div>
<div class="bx" style="left:92px;top:1802px"><i class="h"></i><i class="v"></i></div>
<svg class="ic" style="left:126px;top:1798px" width="26" height="26"><use href="#pkg"/></svg>
<div class="tt" style="left:164px;top:1794px"><b class="q19">u</b><b>t</b><b>i</b><b>l</b></div>
<div class="hd" style="left:110px;top:1842px"></div>
<div class="bx" style="left:92px;top:1834px"><i class="h"></i><i class="v"></i></div>
<svg class="ic" style="left:126px;top:1830px" width="26" height="26"><use href="#pkg"/></svg>
<div class="tt" style="left:164px;top:1826px"><b class="q13">w</b><b>s</b></div>
<div class="hd" style="left:110px;top:1874px"></div>
<div class="bx" style="left:92px;top:1866px"><i class="h"></i><i class="v"></i></div>
<svg class="ic" style="left:122px;top:1858px" width="34" height="34"><use href="#cls"/></svg>
<div class="tt" style="left:164px;top:1858px"><b class="q17">S</b><b>e</b><b>r</b><b class="q19">v</b><b>i</b><b>c</b><b>e</b><b class="q14">C</b><b class="q19">o</b><b class="q19">n</b><b>f</b><b>i</b><b class="q19">g</b><b>.</b><b>c</b><b>l</b><b>a</b><b>s</b><b>s</b></div>
</div>
<div id="sb"></div>
<div id="thumb"></div>
<svg class="ic" style="left:842px;top:78px" width="14" height="12"><use href="#chev"/></svg>
<svg class="ic" style="left:842px;top:1852px;transform:scaleY(-1)" width="14" height="12"><use href="#chev"/></svg>
<div id="gap"></div>

<div id="rp"></div>
<div id="tabstrip"></div>
<div id="tab1"></div>
<div id="tab2"></div>
<svg class="ic" style="left:891px;top:76px" width="34" height="34"><use href="#cls"/></svg>
<div class="ttab" style="left:932px;top:78px"><b class="q14">R</b><b class="q12">m</b><b>i</b><b class="q13">N</b><b class="q14">C</b><b class="q16">L</b><b class="q19">o</b><b>c</b><b>a</b><b>t</b><b class="q19">o</b><b>r</b><b>.</b><b>c</b><b>l</b><b>a</b><b>s</b><b>s</b></div>
<svg class="ic" style="left:1154px;top:82px" width="20" height="20"><use href="#xx"/></svg>
<svg class="ic" style="left:1204px;top:80px" width="34" height="34"><use href="#cls"/></svg>
<div class="ttab" style="left:1244px;top:81px"><b class="q13">N</b><b class="q14">C</b><b class="q16">L</b><b class="q19">o</b><b>c</b><b>a</b><b>t</b><b class="q19">o</b><b>r</b><b>.</b><b>c</b><b>l</b><b>a</b><b>s</b><b>s</b></div>
<svg class="ic" style="left:1430px;top:86px" width="20" height="20"><use href="#xx"/></svg>

<div id="ed"></div>
<div id="hl"></div>
<div id="gut"></div>
<div class="cl" style="top:133px"><span class="k">package</span> nc.bs.framework.rmi;</div>
<div class="cl" style="top:193px"><span class="k">import</span> java.util.HashMap;</div>
<svg class="fd" style="top:199px" width="20" height="20"><use href="#fold"/></svg>
<div class="cl" style="top:223px"><span class="k">import</span> java.util.Properties;</div>
<div class="cl" style="top:253px"><span class="k">import</span> <span class="u">nc.bs.framework.common.NCLocator</span>;</div>
<div class="cl" style="top:283px"><span class="k">import</span> <span class="u">nc.bs.framework.exception.ComponentException</span>;</div>
<div class="cl" style="top:313px"><span class="k">import</span> <span class="u">nc.bs.framework.exception.FrameworkRuntimeException</span>;</div>
<div class="cl" style="top:343px"><span class="k">import</span> <span class="u">nc.bs.framework.naming.Context</span>;</div>
<div class="cl" style="top:583px"><span class="k">public</span> <span class="k">class</span> RmiNCLocator</div>
<div class="cl" style="top:613px">  <span class="k">extends</span> <span class="u">NCLocator</span></div>
<div class="cl" style="top:643px">{</div>
<svg class="fd" style="top:649px" width="20" height="20"><use href="#fold"/></svg>
<div class="cl" style="top:673px">  <span class="k">private</span> <span class="u">Context</span> remoteContext;</div>
<div class="cl" style="top:703px">  <span class="k">private</span> <span class="k">static</span> HashMap&lt;String, <span class="u">Context</span>&gt; remoteResolverMap = <span class="k">new</span> HashMap();</div>
<div class="ln" style="top:703px">20</div>
<div class="cl" style="top:763px">  <span class="k">public</span> Object lookup(String name) <span class="k">throws</span> <span class="u">ComponentException</span> {</div>
<svg class="fd" style="top:769px" width="20" height="20"><use href="#fold"/></svg>
<div class="cl" style="top:793px">    Object result = <span class="k">null</span>;</div>
<div class="ln" style="top:793px">23</div>
<div class="cl" style="top:823px">    <span class="k">try</span> {</div>
<svg class="fd" style="top:829px" width="20" height="20"><use href="#fold"/></svg>
<div class="cl" style="top:853px">      result = <span class="k">this</span>.<span class="u">remoteContext</span>.<span class="u">lookup</span>(name);</div>
<div class="ln" style="top:853px">25</div>
<div class="cl" style="top:883px">    } <span class="k">catch</span> (Throwable e) {</div>
<div class="ln" style="top:883px">26</div>
<svg class="fd" style="top:889px" width="20" height="20"><use href="#fold"/></svg>
<div class="cl" style="top:913px">      <span class="k">if</span> (e <span class="k">instanceof</span> <span class="u">FrameworkRuntimeException</span>)</div>
<div class="ln" style="top:913px">27</div>
<div class="cl" style="top:943px">        <span class="k">throw</span> (<span class="u">FrameworkRuntimeException</span>)e;</div>
<div class="ln" style="top:943px">28</div>
<div class="cl" style="top:973px">      <span class="k">throw</span> <span class="k">new</span> <span class="u">ComponentException</span>(name, <span class="s">&quot;Component resolve exception &quot;</span>, e);</div>
<div class="ln" style="top:973px">29</div>
<div class="cl" style="top:1003px">    }</div>
<div class="cl" style="top:1063px">    <span class="k">return</span> result;</div>
<div class="ln" style="top:1063px">32</div>
<div class="cl" style="top:1093px">  }</div>
<div class="cl" style="top:1153px">  <span class="k">protected</span> <span class="k">void</span> init(Properties env) {</div>
<svg class="fd" style="top:1159px" width="20" height="20"><use href="#fold"/></svg>
<div class="cl" style="top:1183px">    <span class="k">if</span> (env == <span class="k">null</span>)</div>
<div class="ln" style="top:1183px">36</div>
<div class="cl" style="top:1213px">      env = <span class="k">new</span> Properties();</div>
<div class="ln" style="top:1213px">37</div>
<div class="cl" style="top:1243px">    String dispatchUrl = <span class="u">getProperty</span>(env, <span class="s">&quot;SERVICEDISPATCH_URL&quot;</span>);</div>
<div class="ln" style="top:1243px">38</div>
<div class="cl" style="top:1303px">    String module = <span class="u">getProperty</span>(env, <span class="s">&quot;nc.targetModule&quot;</span>);</div>
<div class="ln" style="top:1303px">40</div>
<div class="cl" style="top:1363px">    String key = dispatchUrl;</div>
<div class="ln" style="top:1363px">42</div>
<div class="cl" style="top:1423px">    <span class="k">if</span> (module != <span class="k">null</span> &amp;&amp; !<span class="s">&quot;&quot;</span>.equals(module.trim())) {</div>
<div class="ln" style="top:1423px">44</div>
<svg class="fd" style="top:1429px" width="20" height="20"><use href="#fold"/></svg>
<div class="cl" style="top:1453px">      key = key + <span class="s">&quot;.&quot;</span> + module;</div>
<div class="ln" style="top:1453px">45</div>
<div class="cl" style="top:1483px">    }</div>
<div class="cl" style="top:1513px">    <span class="k">this</span>.<span class="u">remoteContext</span> = (<span class="u">Context</span>)<span class="u">remoteResolverMap</span>.get(key);</div>
<div class="ln" style="top:1513px">47</div>
<div class="cl" style="top:1633px">    <span class="k">if</span> (<span class="k">this</span>.<span class="u">remoteContext</span> == <span class="k">null</span>) {</div>
<div class="ln" style="top:1633px">51</div>
<svg class="fd" style="top:1639px" width="20" height="20"><use href="#fold"/></svg>
<div class="cl" style="top:1663px">      <span class="k">this</span>.<span class="u">remoteContext</span> = <span class="k">new</span> <span class="u">RemoteContextStub</span>(dispatchUrl, module);</div>
<div class="ln" style="top:1663px">52</div>
<div class="cl" style="top:1693px">      <span class="k">synchronized</span> (<span class="u">remoteResolverMap</span>) {</div>
<div class="ln" style="top:1693px">53</div>
<svg class="fd" style="top:1699px" width="20" height="20"><use href="#fold"/></svg>
<div class="cl" style="top:1723px">        <span class="u">remoteResolverMap</span>.put(key, <span class="k">this</span>.<span class="u">remoteContext</span>);</div>
<div class="ln" style="top:1723px">54</div>
<div class="cl" style="top:1753px">      }</div>
<div class="cl" style="top:1783px">    }</div>
<div class="cl" style="top:1813px">  }</div>
<div class="cl" style="top:1843px">}</div>
<div id="redbox"></div>
<div id="edb1"></div><div id="edb2"></div>
<div id="frameB"></div>
</body></html>
